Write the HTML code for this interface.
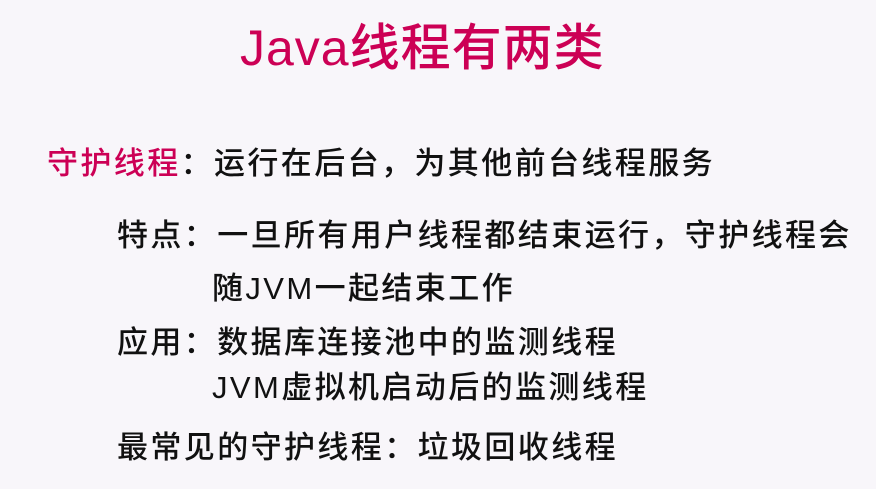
<!DOCTYPE html>
<html><head><meta charset="utf-8"><style>
body{margin:0;width:876px;height:489px;background:#f8f6fa;overflow:hidden;position:relative;font-family:"Liberation Sans","Noto Sans CJK SC",sans-serif;}
.t{position:absolute;left:240px;top:18px;font-size:50px;color:#cc0055;white-space:nowrap;line-height:60px;letter-spacing:1px;font-weight:500;}
.l{position:absolute;font-size:31px;letter-spacing:2.4px;color:#111;white-space:nowrap;line-height:40px;font-weight:500;}
.p{color:#cc0055}
</style></head><body>
<div class="t">Java线程有两类</div>
<div class="l" style="left:47px;top:144px"><span class="p">守护线程</span>：运行在后台，为其他前台线程服务</div>
<div class="l" style="left:117px;top:216px">特点：一旦所有用户线程都结束运行，守护线程会</div>
<div class="l" style="left:212px;top:269px">随JVM一起结束工作</div>
<div class="l" style="left:117px;top:323px">应用：数据库连接池中的监测线程</div>
<div class="l" style="left:212px;top:368px">JVM虚拟机启动后的监测线程</div>
<div class="l" style="left:117px;top:428px">最常见的守护线程：垃圾回收线程</div>
</body></html>
